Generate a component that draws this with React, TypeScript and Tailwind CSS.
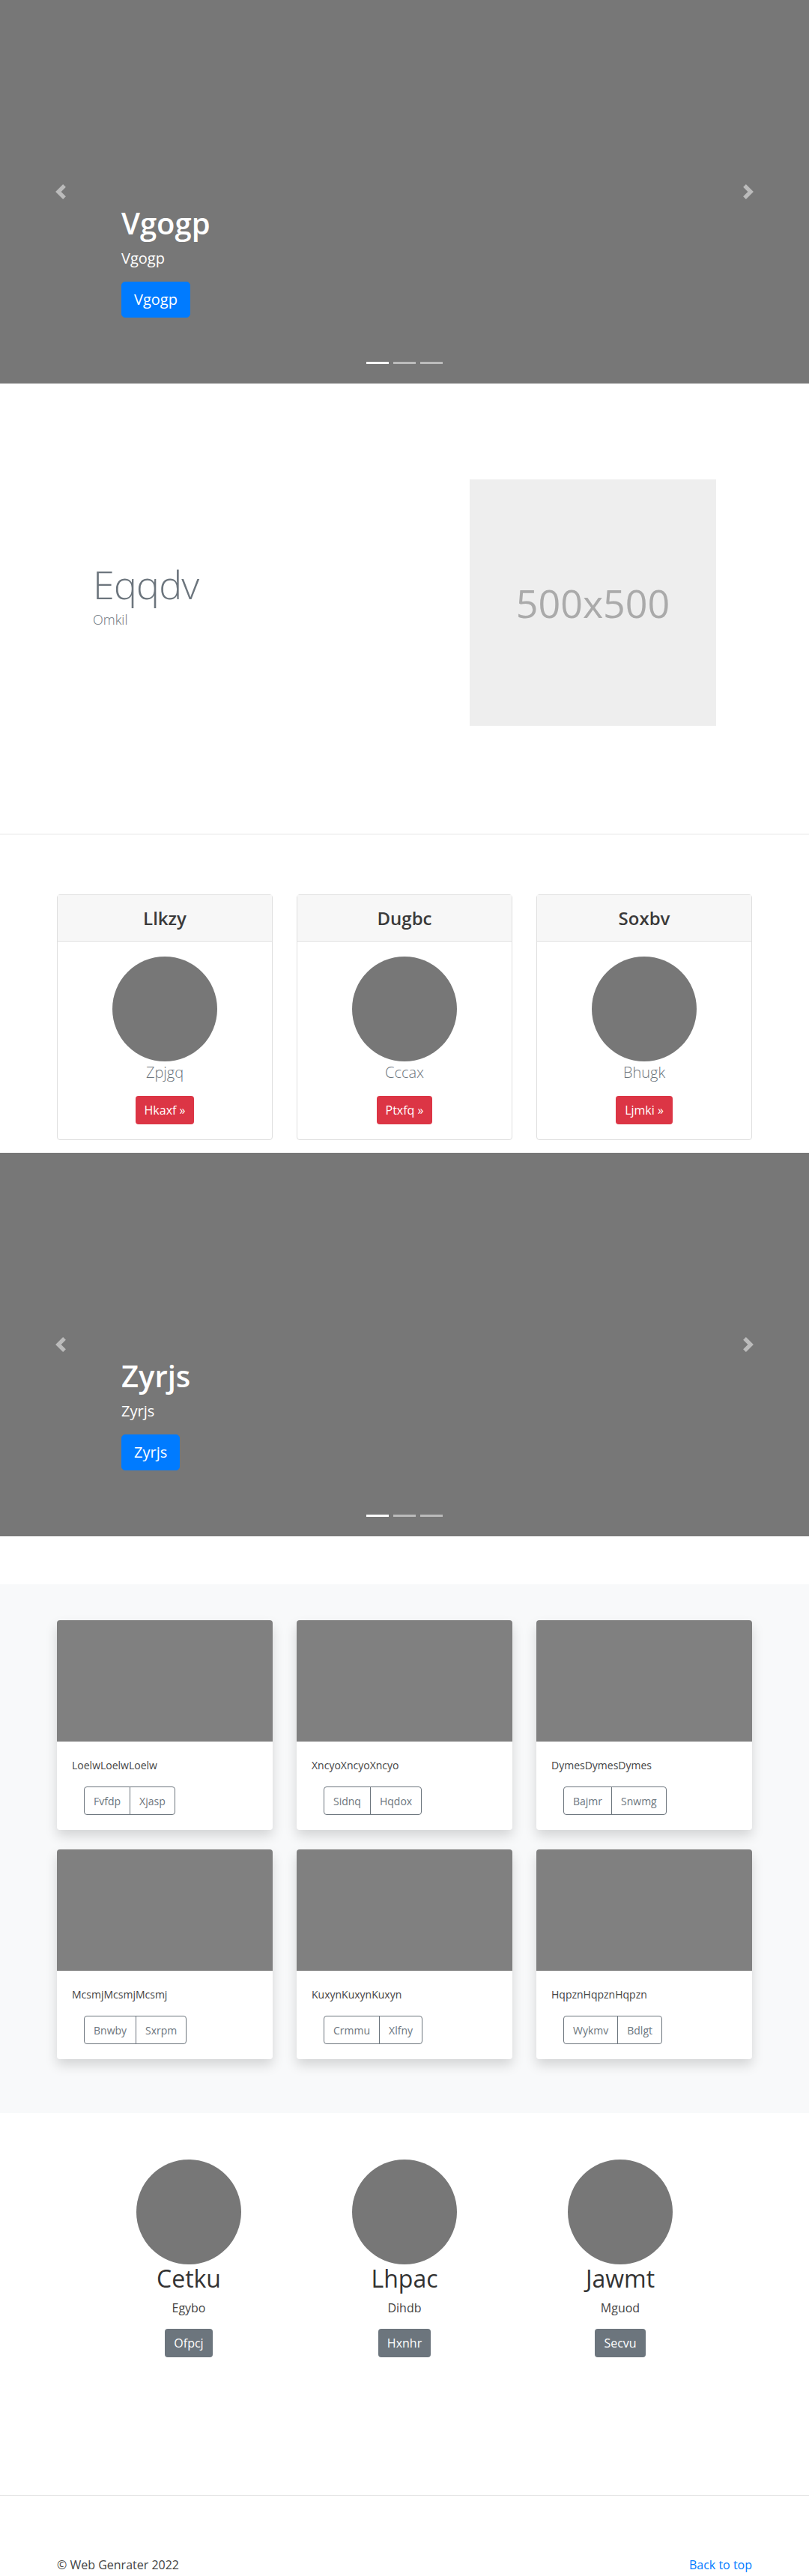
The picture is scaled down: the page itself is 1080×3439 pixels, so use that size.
import React from "react";

const slides = ["Vgogp", "Zyrjs"];

const pricing = [
  { title: "Llkzy", text: "Zpjgq", cta: "Hkaxf »" },
  { title: "Dugbc", text: "Cccax", cta: "Ptxfq »" },
  { title: "Soxbv", text: "Bhugk", cta: "Ljmki »" },
];

const album = [
  { text: "LoelwLoelwLoelw", a: "Fvfdp", b: "Xjasp" },
  { text: "XncyoXncyoXncyo", a: "Sidnq", b: "Hqdox" },
  { text: "DymesDymesDymes", a: "Bajmr", b: "Snwmg" },
  { text: "McsmjMcsmjMcsmj", a: "Bnwby", b: "Sxrpm" },
  { text: "KuxynKuxynKuxyn", a: "Crmmu", b: "Xlfny" },
  { text: "HqpznHqpznHqpzn", a: "Wykmv", b: "Bdlgt" },
];

const people = [
  { name: "Cetku", role: "Egybo", cta: "Ofpcj" },
  { name: "Lhpac", role: "Dihdb", cta: "Hxnhr" },
  { name: "Jawmt", role: "Mguod", cta: "Secvu" },
];

function Carousel({ title }: { title: string }) {
  return (
    <div className="relative h-[512px] bg-[#777777] overflow-hidden">
      {/* prev / next controls */}
      <a href="#" className="absolute inset-y-0 left-0 w-[15%] flex items-center justify-center opacity-50">
        <svg width="20" height="20" viewBox="0 0 8 8" fill="#fff">
          <path d="M5.25 0l-4 4 4 4 1.5-1.5L4.25 4l2.5-2.5L5.25 0z" />
        </svg>
      </a>
      <a href="#" className="absolute inset-y-0 right-0 w-[15%] flex items-center justify-center opacity-50">
        <svg width="20" height="20" viewBox="0 0 8 8" fill="#fff">
          <path d="M2.75 0l-1.5 1.5L3.75 4l-2.5 2.5L2.75 8l4-4-4-4z" />
        </svg>
      </a>

      <div className="absolute left-[15%] right-[15%] bottom-[52px] py-5 text-white">
        <h1 className="text-[40px] leading-[1.2] font-semibold mb-2">{title}</h1>
        <p className="text-[20px] leading-[30px] mb-4">{title}</p>
        <p className="mb-4">
          <a href="#" className="inline-block bg-[#007bff] border border-[#007bff] rounded-[5px] px-4 py-2 text-[20px] leading-[30px] text-white">
            {title}
          </a>
        </p>
      </div>

      {/* indicators */}
      <ol className="absolute bottom-0 inset-x-0 mb-4 flex justify-center gap-[6px]">
        <li className="w-[30px] h-[3px] my-[10px] bg-white" />
        <li className="w-[30px] h-[3px] my-[10px] bg-white/50" />
        <li className="w-[30px] h-[3px] my-[10px] bg-white/50" />
      </ol>
    </div>
  );
}

export default function App() {
  return (
    <div className="font-['Open_Sans',sans-serif] text-[#212529] bg-white">
      <Carousel title={slides[0]} />

      {/* Featurette */}
      <section className="pt-[128px] pb-[144px]">
        <div className="w-[928px] mx-auto flex items-center">
          <div className="flex-1 pl-[48px] mb-[14px]">
            <h2 className="text-[52px] leading-none font-light tracking-[-0.8px] text-[#6c757d]">Eqqdv</h2>
            <p className="text-[18px] font-light text-[#6c757d] mt-2">Omkil</p>
          </div>
          <div className="w-[329px] h-[329px] mr-[48px] bg-[#eeeeee] flex items-center justify-center">
            <span className="text-[52px] text-[#aaaaaa]">500x500</span>
          </div>
        </div>
      </section>

      <hr className="border-0 border-t border-[#e6e6e6]" />

      {/* Pricing cards */}
      <section className="pt-[80px] pb-[17px]">
        <div className="w-[928px] mx-auto grid grid-cols-3 gap-8">
          {pricing.map((p) => (
            <div key={p.title} className="border border-[#dfdfdf] rounded text-center">
              <div className="h-[62px] bg-[#f7f7f7] border-b border-[#dfdfdf] flex items-center justify-center">
                <h4 className="text-[24px] font-semibold text-[#3a3a3a]">{p.title}</h4>
              </div>
              <div className="p-5 flex flex-col items-center">
                <div className="w-[140px] h-[140px] rounded-full bg-[#777777]" />
                <p className="text-[20px] leading-[30px] font-light text-[#6c757d] mb-4">{p.text}</p>
                <a href="#" className="h-[38px] px-3 flex items-center rounded bg-[#dc3545] text-white text-[16px]">
                  {p.cta}
                </a>
              </div>
            </div>
          ))}
        </div>
      </section>

      <Carousel title={slides[1]} />

      {/* Album */}
      <section className="mt-16 bg-[#f8f9fa] pt-12 pb-[72px]">
        <div className="w-[928px] mx-auto grid grid-cols-3 gap-x-8 gap-y-[26px]">
          {album.map((c) => (
            <div key={c.text} className="bg-white rounded overflow-hidden shadow-[0_0.5rem_1rem_rgba(0,0,0,0.15)]">
              <div className="h-[162px] bg-[#808080]" />
              <div className="p-5">
                <p className="text-[14px] leading-6 text-[#444] mb-4">{c.text}</p>
                <div className="ml-4 inline-flex">
                  <button className="h-[38px] px-3 text-[14px] text-[#6c757d] border border-[#6c757d] rounded-l">
                    {c.a}
                  </button>
                  <button className="h-[38px] px-3 -ml-px text-[14px] text-[#6c757d] border border-[#6c757d] rounded-r">
                    {c.b}
                  </button>
                </div>
              </div>
            </div>
          ))}
        </div>
      </section>

      {/* Team */}
      <section className="pt-[62px] pb-[184px]">
        <div className="w-[864px] mx-auto grid grid-cols-3">
          {people.map((m) => (
            <div key={m.name} className="flex flex-col items-center text-center">
              <div className="w-[140px] h-[140px] rounded-full bg-[#777777]" />
              <h2 className="text-[32px] leading-[1.2] mb-2 text-[#333]">{m.name}</h2>
              <p className="text-[16px] leading-6 mb-4 text-[#444]">{m.role}</p>
              <a href="#" className="h-[38px] px-3 flex items-center rounded bg-[#6c757d] text-white text-[16px]">
                {m.cta}
              </a>
            </div>
          ))}
        </div>
      </section>

      <hr className="border-0 border-t border-[#e6e6e6]" />

      <footer className="pt-[80px] pb-4">
        <div className="w-[928px] mx-auto flex justify-between text-[16px] leading-6">
          <p className="text-[#444]">© Web Genrater 2022</p>
          <a href="#" className="text-[#007bff]">Back to top</a>
        </div>
      </footer>
    </div>
  );
}
